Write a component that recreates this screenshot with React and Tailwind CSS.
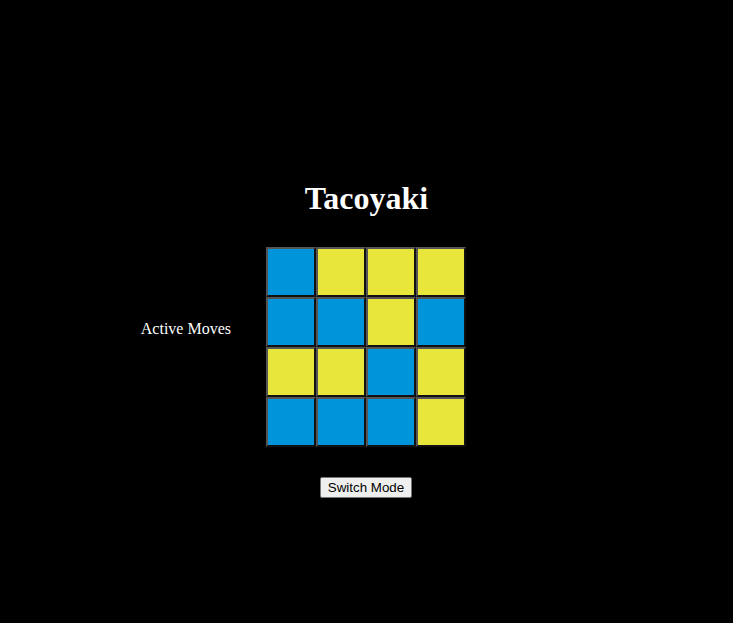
const BOARD = [
  ['b', 'y', 'y', 'y'],
  ['b', 'b', 'y', 'b'],
  ['y', 'y', 'b', 'y'],
  ['b', 'b', 'b', 'y'],
]

function Cell({ color }) {
  return (
    <div
      className={`w-[50px] h-[50px] border-2 border-t-[#555555] border-l-[#555555] border-r-[#111111] border-b-[#111111] ${
        color === 'b' ? 'bg-[#0095da]' : 'bg-[#e8e63a]'
      }`}
    />
  )
}

export default function App() {
  return (
    <div className="min-h-screen bg-black flex flex-col items-center pt-[180px] font-['Liberation_Serif',serif] text-white">
      <h1 className="text-[32px] leading-[36px] font-bold">Tacoyaki</h1>

      <div className="w-full grid grid-cols-[266px_200px_1fr] mt-[31px]">
        <div className="flex justify-end pr-[35px]">
          <span className="mt-[73px] text-[16px] leading-[18px] h-fit">Active Moves</span>
        </div>
        <div className="grid grid-cols-4">
          {BOARD.flat().map((c, i) => (
            <Cell key={i} color={c} />
          ))}
        </div>
        <div />
      </div>

      <button className="mt-[30px] mr-[1px] h-[21px] w-[92px] bg-[#efefef] border border-[#767676] rounded-[2px] text-black text-[13.33px] leading-[15px] font-['Liberation_Sans',Arial,sans-serif]">
        Switch Mode
      </button>
    </div>
  )
}
